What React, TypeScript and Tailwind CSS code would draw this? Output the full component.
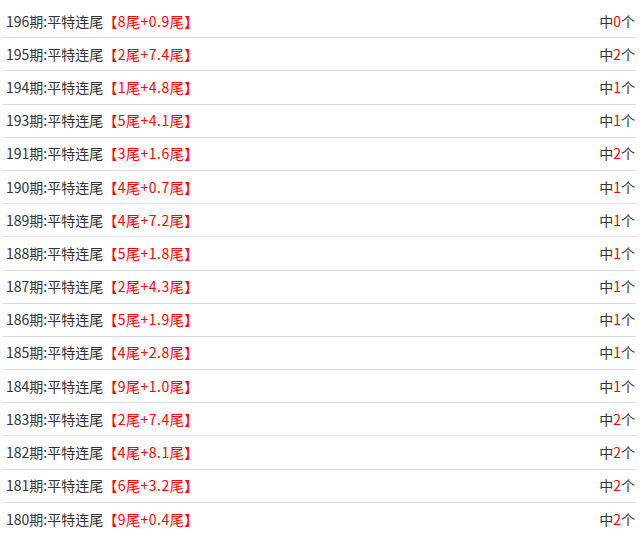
import React from "react";

const rows: [string, string, string, string][] = [
  ["196", "8", "0.9", "0"],
  ["195", "2", "7.4", "2"],
  ["194", "1", "4.8", "1"],
  ["193", "5", "4.1", "1"],
  ["191", "3", "1.6", "2"],
  ["190", "4", "0.7", "1"],
  ["189", "4", "7.2", "1"],
  ["188", "5", "1.8", "1"],
  ["187", "2", "4.3", "1"],
  ["186", "5", "1.9", "1"],
  ["185", "4", "2.8", "1"],
  ["184", "9", "1.0", "1"],
  ["183", "2", "7.4", "2"],
  ["182", "4", "8.1", "2"],
  ["181", "6", "3.2", "2"],
  ["180", "9", "0.4", "2"],
];

export default function App() {
  return (
    <div
      className="bg-white pt-[5px] pl-[2px] pr-[7px] text-[14px] text-[#333]"
      style={{ fontFamily: '"Microsoft YaHei", "Noto Sans CJK SC", "Noto Sans", sans-serif' }}
    >
      {rows.map(([p, a, b, n], i) => (
        <div
          key={p}
          className={
            "flex items-center justify-between h-[33.2px] pl-[4px] pr-[1px] " +
            (i < rows.length - 1 ? "border-b border-[#dddddd]" : "")
          }
        >
          <div className="whitespace-nowrap">
            {p}期:平特连尾
            <span className="text-[#ff0000] tracking-[0.5px]">
              【{a}尾+{b}尾】
            </span>
          </div>
          <div className="whitespace-nowrap">
            中<span className="text-[#ff0000]">{n}</span>个
          </div>
        </div>
      ))}
    </div>
  );
}
